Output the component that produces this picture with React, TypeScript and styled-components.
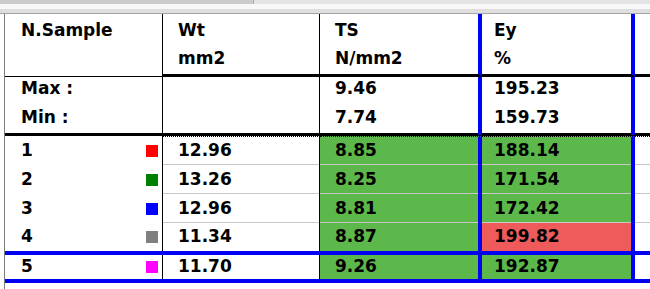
import styled, { createGlobalStyle } from "styled-components";

const GREEN = "#5cb84a";
const RED = "#ef5a5a";
const BLUE = "#0000f2";
const ROW_LINE = "#c8c8c8";
const COLUMNS = "158px 157px 162px 153px 1fr";

type Col = 0 | 1 | 2 | 3 | 4;
type Tone = "plain" | "ok" | "bad";

interface Sample {
  id: number;
  swatch: string;
  wt: string;
  ts: string;
  ey: string;
  eyTone: Tone;
}

const samples: Sample[] = [
  { id: 1, swatch: "#ff0000", wt: "12.96", ts: "8.85", ey: "188.14", eyTone: "ok" },
  { id: 2, swatch: "#008000", wt: "13.26", ts: "8.25", ey: "171.54", eyTone: "ok" },
  { id: 3, swatch: "#0000ff", wt: "12.96", ts: "8.81", ey: "172.42", eyTone: "ok" },
  { id: 4, swatch: "#808080", wt: "11.34", ts: "8.87", ey: "199.82", eyTone: "bad" },
  { id: 5, swatch: "#ff00ff", wt: "11.70", ts: "9.26", ey: "192.87", eyTone: "ok" },
];

const padLeft: Record<Col, number> = { 0: 16, 1: 15, 2: 15, 3: 12, 4: 0 };

const rightBorder = (col: Col) =>
  col === 0 || col === 1
    ? "1px solid #000"
    : col === 2 || col === 3
    ? `4px solid ${BLUE}`
    : "none";

const toneColor = (tone: Tone) =>
  tone === "ok" ? GREEN : tone === "bad" ? RED : "#fff";

const GlobalStyle = createGlobalStyle`
  html, body {
    margin: 0;
    padding: 0;
    background: #fff;
    overflow: hidden;
  }
  body {
    font-family: "DejaVu Sans", Verdana, sans-serif;
    font-weight: bold;
    font-size: 17px;
    color: #000;
  }
`;

const Screen = styled.div`
  width: 650px;
  height: 289px;
  display: flex;
  flex-direction: column;
`;

const ScrollStrip = styled.div`
  height: 4px;
  display: flex;
  background: #e4e4e4;
`;

const ScrollThumb = styled.div`
  width: 253px;
  background: #cbcbcb;
  border-right: 1px solid #a9a9a9;
`;

const Gap = styled.div`
  height: 5px;
  background: #f8f8f8;
`;

const Band = styled.div`
  height: 4px;
  background: #dedede;
  border-bottom: 1px solid #a4a4a4;
`;

const Sheet = styled.div`
  flex: 1;
  margin-left: 4px;
  border-left: 1px solid #7d7d7d;
  display: flex;
  flex-direction: column;
`;

const Row = styled.div<{ $height: number; $bottom?: string }>`
  display: grid;
  grid-template-columns: ${COLUMNS};
  flex: none;
  height: ${(p) => p.$height}px;
  box-sizing: border-box;
  border-bottom: ${(p) => p.$bottom ?? "none"};
`;

const HeadCell = styled.div<{ $col: Col }>`
  box-sizing: border-box;
  padding: 2px 0 0 ${(p) => padLeft[p.$col]}px;
  line-height: 28px;
  border-right: ${(p) => rightBorder(p.$col)};
  border-bottom: ${(p) => (p.$col === 0 ? "1px" : "3px")} solid #000;
`;

const StatCell = styled.div<{ $col: Col }>`
  box-sizing: border-box;
  padding-left: ${(p) => padLeft[p.$col]}px;
  border-right: ${(p) => rightBorder(p.$col)};
`;

const StatLine = styled.div`
  height: 29px;
  line-height: 22px;
`;

const DataCell = styled.div<{ $col: Col; $tone: Tone; $ruled: boolean; $focus: boolean }>`
  box-sizing: border-box;
  display: flex;
  align-items: center;
  justify-content: space-between;
  padding-left: ${(p) => padLeft[p.$col]}px;
  padding-right: ${(p) => (p.$col === 0 ? 4 : 0)}px;
  padding-bottom: 2px;
  background-color: ${(p) => toneColor(p.$tone)};
  border-right: ${(p) => rightBorder(p.$col)};
  box-shadow: ${(p) =>
    p.$ruled && p.$col !== 0 ? `inset 0 -1px 0 ${ROW_LINE}` : "none"};
  border-top: ${(p) => (p.$focus && p.$col !== 0 ? "1px dotted #000" : "0 none")};
`;

const Swatch = styled.span<{ $color: string }>`
  width: 12px;
  height: 12px;
  margin-top: 2px;
  background: ${(p) => p.$color};
`;

const App = () => {
  return (
    <Screen>
      <GlobalStyle />
      <ScrollStrip>
        <ScrollThumb />
      </ScrollStrip>
      <Gap />
      <Band />
      <Sheet>
        <Row $height={63}>
          <HeadCell $col={0}>N.Sample</HeadCell>
          <HeadCell $col={1}>
            Wt
            <br />
            mm2
          </HeadCell>
          <HeadCell $col={2}>
            TS
            <br />
            N/mm2
          </HeadCell>
          <HeadCell $col={3}>
            Ey
            <br />%
          </HeadCell>
          <HeadCell $col={4} />
        </Row>
        <Row $height={59} $bottom="3px solid #000">
          <StatCell $col={0}>
            <StatLine>Max :</StatLine>
            <StatLine>Min :</StatLine>
          </StatCell>
          <StatCell $col={1} />
          <StatCell $col={2}>
            <StatLine>9.46</StatLine>
            <StatLine>7.74</StatLine>
          </StatCell>
          <StatCell $col={3}>
            <StatLine>195.23</StatLine>
            <StatLine>159.73</StatLine>
          </StatCell>
          <StatCell $col={4} />
        </Row>
        {samples.map((s, i) => {
          const last = i === samples.length - 1;
          const beforeLast = i === samples.length - 2;
          const blue = last || beforeLast;
          const focus = i === 0;
          return (
            <Row
              key={s.id}
              $height={last ? 28 : beforeLast ? 32 : 29}
              $bottom={blue ? `4px solid ${BLUE}` : undefined}
            >
              <DataCell $col={0} $tone="plain" $ruled={!blue} $focus={focus}>
                <span>{s.id}</span>
                <Swatch $color={s.swatch} />
              </DataCell>
              <DataCell $col={1} $tone="plain" $ruled={!blue} $focus={focus}>
                {s.wt}
              </DataCell>
              <DataCell $col={2} $tone="ok" $ruled={!blue} $focus={focus}>
                {s.ts}
              </DataCell>
              <DataCell $col={3} $tone={s.eyTone} $ruled={!blue} $focus={focus}>
                {s.ey}
              </DataCell>
              <DataCell $col={4} $tone="plain" $ruled={!blue} $focus={focus} />
            </Row>
          );
        })}
      </Sheet>
    </Screen>
  );
};

export default App;
